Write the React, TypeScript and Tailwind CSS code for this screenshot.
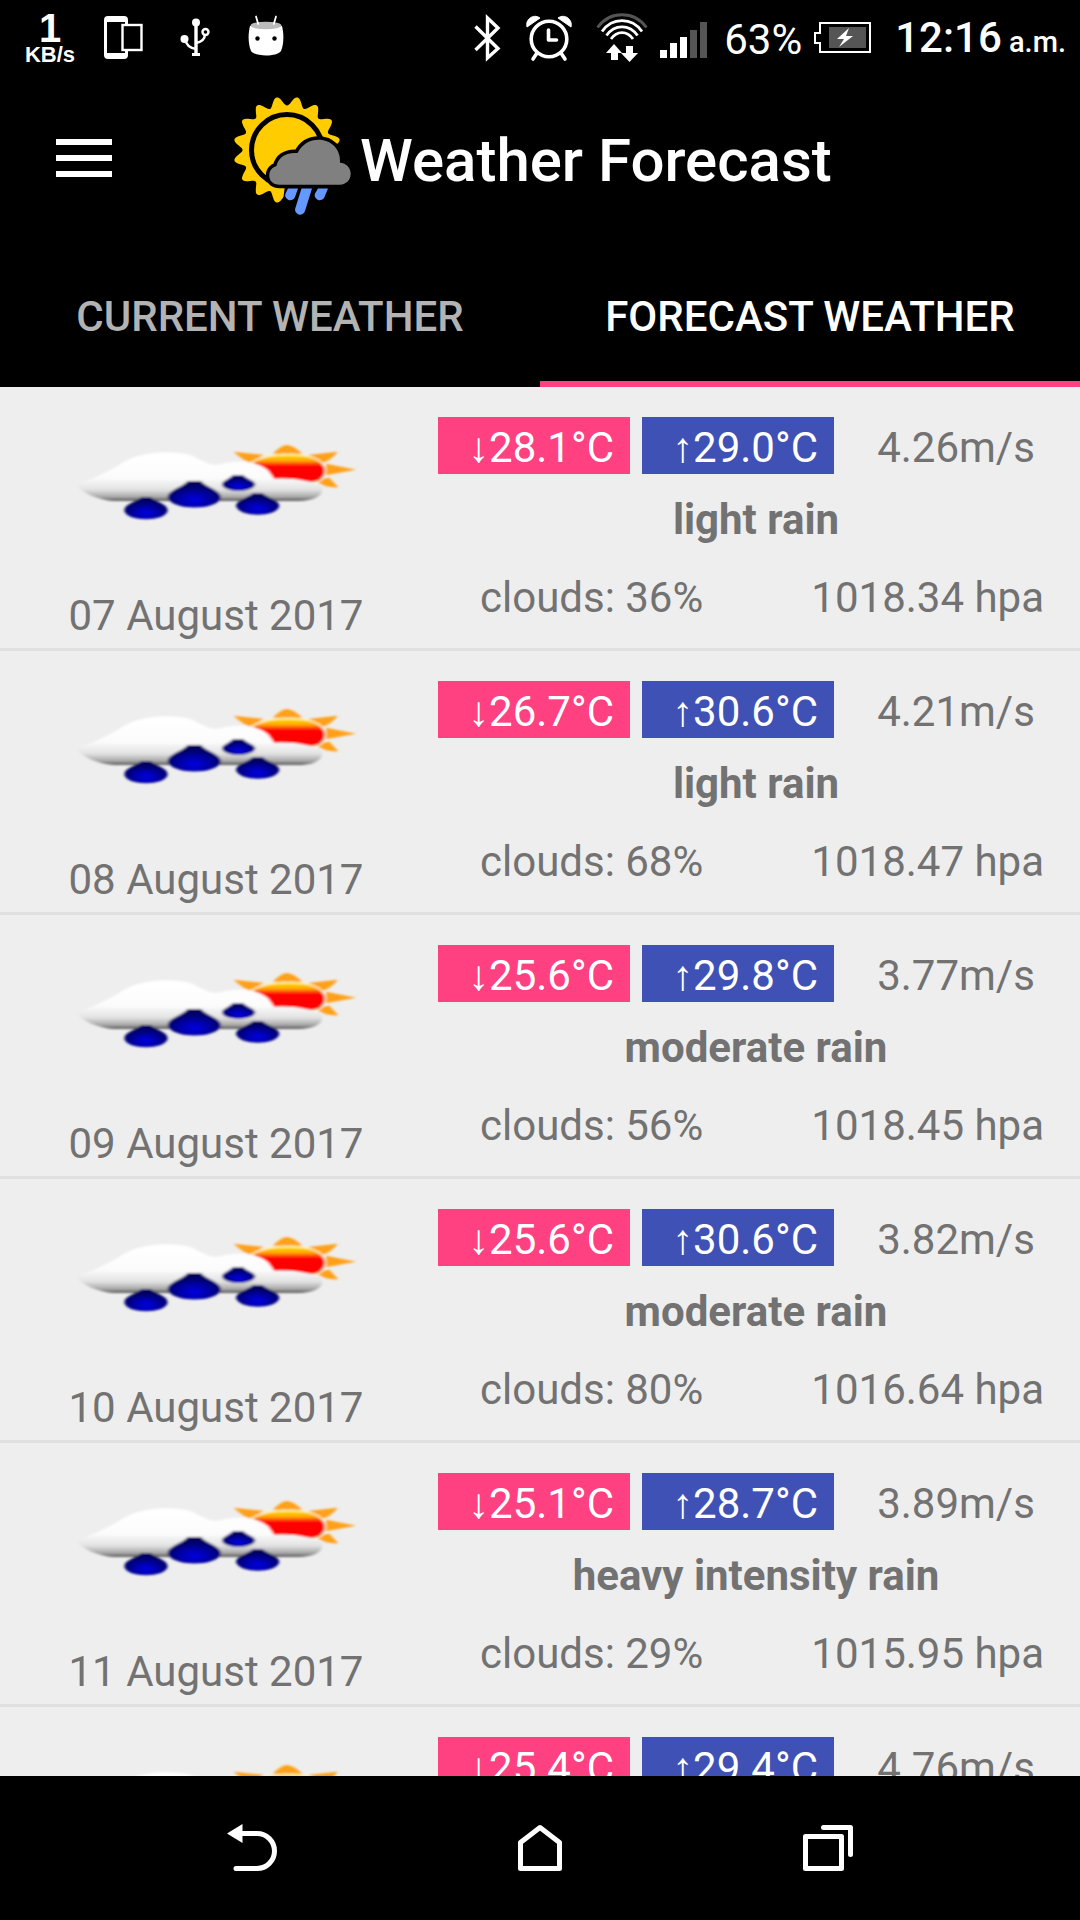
const forecasts = [
  { date: '07 August 2017', low: '28.1', high: '29.0', wind: '4.26', sky: 'light rain', clouds: 36, pressure: '1018.34' },
  { date: '08 August 2017', low: '26.7', high: '30.6', wind: '4.21', sky: 'light rain', clouds: 68, pressure: '1018.47' },
  { date: '09 August 2017', low: '25.6', high: '29.8', wind: '3.77', sky: 'moderate rain', clouds: 56, pressure: '1018.45' },
  { date: '10 August 2017', low: '25.6', high: '30.6', wind: '3.82', sky: 'moderate rain', clouds: 80, pressure: '1016.64' },
  { date: '11 August 2017', low: '25.1', high: '28.7', wind: '3.89', sky: 'heavy intensity rain', clouds: 29, pressure: '1015.95' },
  { date: '12 August 2017', low: '25.4', high: '29.4', wind: '4.76', sky: 'light rain', clouds: 44, pressure: '1016.02' },
];

function PhoneIcon() {
  return (
    <svg width="40" height="46" viewBox="0 0 40 46" aria-hidden="true">
      <path fillRule="evenodd" fill="#fff" d="M4 1h16a4 4 0 0 1 4 4v35a4 4 0 0 1-4 4H4a4 4 0 0 1-4-4V5a4 4 0 0 1 4-4ZM3 7v31h18V7Z" />
      <rect x="18.5" y="10" width="19" height="25" fill="#000" stroke="#fff" strokeWidth="2.4" />
    </svg>
  );
}

function UsbIcon() {
  return (
    <svg width="32" height="40" viewBox="0 0 32 40" aria-hidden="true">
      <g fill="none" stroke="#fff" strokeWidth="2.4">
        <path d="M16 4v32" strokeWidth="3.4" />
        <path d="M5 21c1 6 5 9 11 10M25 16c0 5-4 8-9 9" />
        <circle cx="25.5" cy="14" r="3" />
      </g>
      <path d="M12 35h8v3h-8z" fill="#fff" />
      <circle cx="16" cy="4.5" r="4" fill="#fff" />
      <circle cx="4.5" cy="21" r="4" fill="#fff" />
    </svg>
  );
}

function RobotIcon() {
  return (
    <svg width="36" height="46" viewBox="0 0 36 46" aria-hidden="true">
      <path d="M2 11C0 19 0 29 3 36 7 42 29 42 33 36 36 29 36 19 34 11Z" fill="#fff" />
      <ellipse cx="18" cy="10.5" rx="15.5" ry="3.8" fill="#bbb" />
      <path d="M8 1.500l2.200 7.500M28 1.500l-2.200 7.500" stroke="#fff" strokeWidth="1.8" strokeLinecap="round" />
      <circle cx="9.5" cy="23.5" r="2.2" />
      <circle cx="26.5" cy="23.5" r="2.2" />
    </svg>
  );
}

function BluetoothIcon() {
  return (
    <svg width="28" height="48" viewBox="0 0 28 48" fill="none" stroke="#fff" strokeWidth="3.4" aria-hidden="true">
      <path d="M1.500 12.500l22.500 22L13.500 44V4L24 14 1.500 36" />
    </svg>
  );
}

function AlarmIcon() {
  return (
    <svg width="46" height="48" viewBox="0 0 46 48" aria-hidden="true">
      <path d="M1 13C-1 6 7-1 14 4ZM45 13C47 6 39-1 32 4Z" fill="#fff" stroke="#fff" strokeWidth="1" />
      <g fill="none" stroke="#fff" strokeWidth="3.6" strokeLinecap="round">
        <path d="M11 39l-4 6M35 39l4 6" />
        <circle cx="23" cy="25" r="17.8" fill="#000" />
        <path d="M22.500 16v10h8" strokeLinejoin="round" />
      </g>
    </svg>
  );
}

function WifiIcon() {
  return (
    <svg width="52" height="50" viewBox="0 0 52 50" aria-hidden="true">
      <g fill="none" stroke="#fff" strokeWidth="2.8">
        <path d="M1.500 14.500C14-2.500 38-2.500 50.500 14.500" stroke="#555" />
        <path d="M6 18.500c10-14.500 30-14.500 40 0" />
        <path d="M10.500 22.500c8-11.500 23-11.500 31 0" />
        <path d="M15 26c6-8.500 16-8.500 22 0" />
      </g>
      <path d="M18 31l8 9h-4v7h-7v-7h-5ZM30 33h7v7h5l-8.500 9L25 40h5Z" fill="#fff" />
    </svg>
  );
}

function SignalIcon() {
  return (
    <svg width="48" height="36" viewBox="0 0 48 36" aria-hidden="true">
      <path d="M0 28h7v8H0zM10 21h7v15h-7zM20 15h7v21h-7z" fill="#fff" />
      <path d="M30 8h7v28h-7zM40 0h7v36h-7z" fill="#555" />
    </svg>
  );
}

function BatteryIcon() {
  return (
    <svg width="57" height="32" viewBox="0 0 57 32" aria-hidden="true">
      <path d="M6 1h50v29H6V21H1V11h5Z" fill="none" stroke="#fff" strokeWidth="2" />
      <path d="M15 5h37v21H15z" fill="#555" />
      <path d="M35 6L23 17h7l-5 8 14-11h-7Z" fill="#fff" />
    </svg>
  );
}

const sunPoints = Array.from({ length: 288 }, (_, i) => {
  const a = (i / 288) * Math.PI * 2;
  const r = 49 - 4.6 * Math.cos(16 * a);
  return `${(53 + r * Math.sin(a)).toFixed(1)},${(53 - r * Math.cos(a)).toFixed(1)}`;
}).join(' ');

function AppLogo() {
  return (
    <svg width="118" height="118" viewBox="0 0 118 118" aria-hidden="true">
      <polygon points={sunPoints} fill="#fc0" />
      <circle cx="53" cy="53" r="35.5" fill="none" stroke="#000" strokeWidth="5" />
      <path d="M51 88H118V118H50L48 112Z" />
      <path
        d="M46 87.700C38 87.700 35.300 83 35.300 78.500C35.300 73 39 70 42.500 69C44 61 51 55 63.500 56C68 47 76 42.700 84.500 42.700C97 42.700 107 52 106 65.700C112 65.700 116.700 71 116.700 76.500C116.700 83 112 87.700 106 87.700Z"
        fill="#808080"
        stroke="#000"
        strokeWidth="7"
        paintOrder="stroke"
      />
      <path
        d="M54 91.500h10l-3 8.500a5 5 0 0 1-9.500-3.500ZM67.500 91.500h10.500l-7 22.500a5 5 0 0 1-9.700-2.800ZM84 91.500h10l-3.500 8.500a5 5 0 0 1-9.500-3.500Z"
        fill="#69f"
      />
    </svg>
  );
}

function RainIcon() {
  return (
    <svg width="310" height="100" viewBox="0 0 930 300" role="img" aria-label="Rain with some sun">
      <defs>
        <linearGradient id="cloud" gradientUnits="userSpaceOnUse" x1="0" y1="70" x2="0" y2="215">
          <stop offset="0" stopColor="#fff" />
          <stop offset=".5" stopColor="#fcfcfc" />
          <stop offset=".75" stopColor="#e2e2e2" />
          <stop offset=".9" stopColor="#aaa" />
          <stop offset="1" stopColor="#444" />
        </linearGradient>
        <linearGradient id="sun" gradientUnits="userSpaceOnUse" x1="0" y1="75" x2="0" y2="112">
          <stop offset="0" stopColor="#ffe000" />
          <stop offset=".5" stopColor="#ffa000" />
          <stop offset=".9" stopColor="#f00" />
        </linearGradient>
        <radialGradient id="drop" cx=".5" cy=".72" r=".55">
          <stop offset="0" stopColor="#0000e0" />
          <stop offset=".5" stopColor="#0000a8" />
          <stop offset="1" stopColor="#000060" />
        </radialGradient>
        <filter id="soft" x="-5%" y="-10%" width="110%" height="120%">
          <feGaussianBlur stdDeviation="5 3" />
        </filter>
      </defs>
      <g filter="url(#soft)">
        <path
          d="M635 72Q660 45 680 45Q700 48 725 72ZM518 65L608 75L570 100Q545 90 518 65ZM830 65L742 75L785 98Q815 88 830 65ZM795 101L885 119L795 136ZM760 150L805 143L832 172Q790 174 760 150Z"
          fill="#ffa019"
        />
        <path
          d="M572 98C620 65 740 65 778 95C808 120 790 155 755 158L640 158Z"
          fill="url(#sun)"
          stroke="#fff2c8"
          strokeWidth="5"
        />
        <path
          d="M45 165C100 145 150 120 185 98C240 62 340 60 390 76C420 90 440 103 465 106C520 88 590 92 622 122L640 147C690 142 750 152 782 170C790 195 765 213 710 213H160C110 210 70 192 45 165Z"
          fill="url(#cloud)"
        />
        <g fill="url(#drop)">
          <path d="M240 202H270C285 216 320 222 320 242C312 276 198 276 190 242C190 222 225 216 240 202Z" />
          <path d="M380 153H420C435 172 480 180 480 203C468 242 334 242 320 203C320 180 365 172 380 153Z" />
          <path d="M515 136H547C558 148 583 152 583 164C573 188 491 188 483 164C483 152 505 148 515 136Z" />
          <path d="M575 190H605C620 204 655 210 655 229C645 263 537 263 525 229C525 210 560 204 575 190Z" />
        </g>
      </g>
    </svg>
  );
}

function Badge({ arrow, value, tone }: { arrow: string; value: string; tone: string }) {
  return (
    <span className={`w-48 pt-[7px] pr-4 text-right text-white ${tone}`}>
      {arrow}
      {value}°C
    </span>
  );
}

export default function App() {
  return (
    <div className="flex h-screen flex-col overflow-hidden bg-black font-[Roboto,'Noto_Sans',sans-serif] text-[42px] leading-[48px] text-white">
      <header className="shrink-0">
        <div className="flex h-[75px] items-center justify-between pr-3.5 pl-6">
          <div className="flex items-center">
            <div className="flex w-[52px] flex-col items-center pt-1 font-['Liberation_Sans',sans-serif] font-bold">
              <span className="text-[40px] leading-[30px]">1</span>
              <span className="text-[22px] leading-[24px]">KB/s</span>
            </div>
            <div className="ml-7 flex items-center gap-9">
              <PhoneIcon />
              <UsbIcon />
              <RobotIcon />
            </div>
          </div>
          <div className="flex items-center">
            <div className="flex items-center gap-6">
              <BluetoothIcon />
              <AlarmIcon />
              <WifiIcon />
            </div>
            <span className="mt-1 ml-3">
              <SignalIcon />
            </span>
            <span className="mt-1 ml-4">63%</span>
            <span className="ml-3">
              <BatteryIcon />
            </span>
            <time className="mt-1 ml-6 font-medium">
              12:16<span className="text-[29px]"> a.m.</span>
            </time>
          </div>
        </div>
        <div className="flex h-[168px] items-center pl-14">
          <button type="button" aria-label="Open menu" className="mb-0.5 flex w-14 flex-col gap-2.5">
            <span className="h-1.5 bg-white" />
            <span className="h-1.5 bg-white" />
            <span className="h-1.5 bg-white" />
          </button>
          <div className="ml-[122px] flex items-center gap-2">
            <div className="mb-1.5 shrink-0">
              <AppLogo />
            </div>
            <h1 className="pt-1 text-[60px] leading-[70px] font-medium">Weather Forecast</h1>
          </div>
        </div>
        <nav className="grid h-36 grid-cols-2 font-medium" role="tablist">
          <button type="button" role="tab" aria-selected="false" className="border-y-[6px] border-transparent pt-1 text-[#b3b3b3]">
            CURRENT WEATHER
          </button>
          <button type="button" role="tab" aria-selected="true" className="border-y-[6px] border-t-transparent border-b-[#ff4081] pt-1">
            FORECAST WEATHER
          </button>
        </nav>
      </header>

      <main className="min-h-0 flex-1 overflow-hidden bg-[#eee] text-[#727272]">
        <ul>
          {forecasts.map((f) => (
            <li key={f.date} className="grid grid-cols-[2fr_3fr] border-b-[3px] border-[#e0e0e0]">
              <div className="flex flex-col items-center justify-between pt-[43px] pb-2">
                <RainIcon />
                <time>{f.date}</time>
              </div>
              <div className="pt-[30px] pb-[26px]">
                <div className="flex h-[57px] gap-3 pl-1.5">
                  <Badge arrow="↓" value={f.low} tone="bg-[#ff4081]" />
                  <Badge arrow="↑" value={f.high} tone="bg-[#3f51b5]" />
                  <span className="flex-1 pt-[7px] pr-3.5 text-center">{f.wind}m/s</span>
                </div>
                <p className="mt-[22px] text-center font-bold">{f.sky}</p>
                <div className="mt-[30px] flex justify-between pr-9 pl-12">
                  <span>clouds: {f.clouds}%</span>
                  <span>{f.pressure} hpa</span>
                </div>
              </div>
            </li>
          ))}
        </ul>
      </main>

      <footer className="grid h-36 shrink-0 grid-cols-3 px-[10%]">
        <button type="button" aria-label="Back" className="flex items-center justify-center">
          <svg width="52" height="50" viewBox="0 0 52 50" aria-hidden="true">
            <path d="M16 10.500h15a17.500 17.500 0 0 1 0 35H10" fill="none" stroke="#fff" strokeWidth="5" strokeLinecap="round" />
            <path d="M1 10.500L16.500 1v19Z" fill="#fff" />
          </svg>
        </button>
        <button type="button" aria-label="Home" className="flex items-center justify-center">
          <svg width="44" height="50" viewBox="0 0 44 50" aria-hidden="true">
            <path d="M2.500 45.500V19.500L22 4.500 41.500 19.500v26Z" fill="none" stroke="#fff" strokeWidth="5" strokeLinejoin="round" />
          </svg>
        </button>
        <button type="button" aria-label="Recent apps" className="flex items-center justify-center">
          <svg width="50" height="50" viewBox="0 0 50 50" fill="none" stroke="#fff" strokeWidth="5" strokeLinecap="round" strokeLinejoin="round" aria-hidden="true">
            <path d="M2.500 13.500h36v32h-36ZM20.500 4.500h27v27" />
          </svg>
        </button>
      </footer>
    </div>
  );
}
